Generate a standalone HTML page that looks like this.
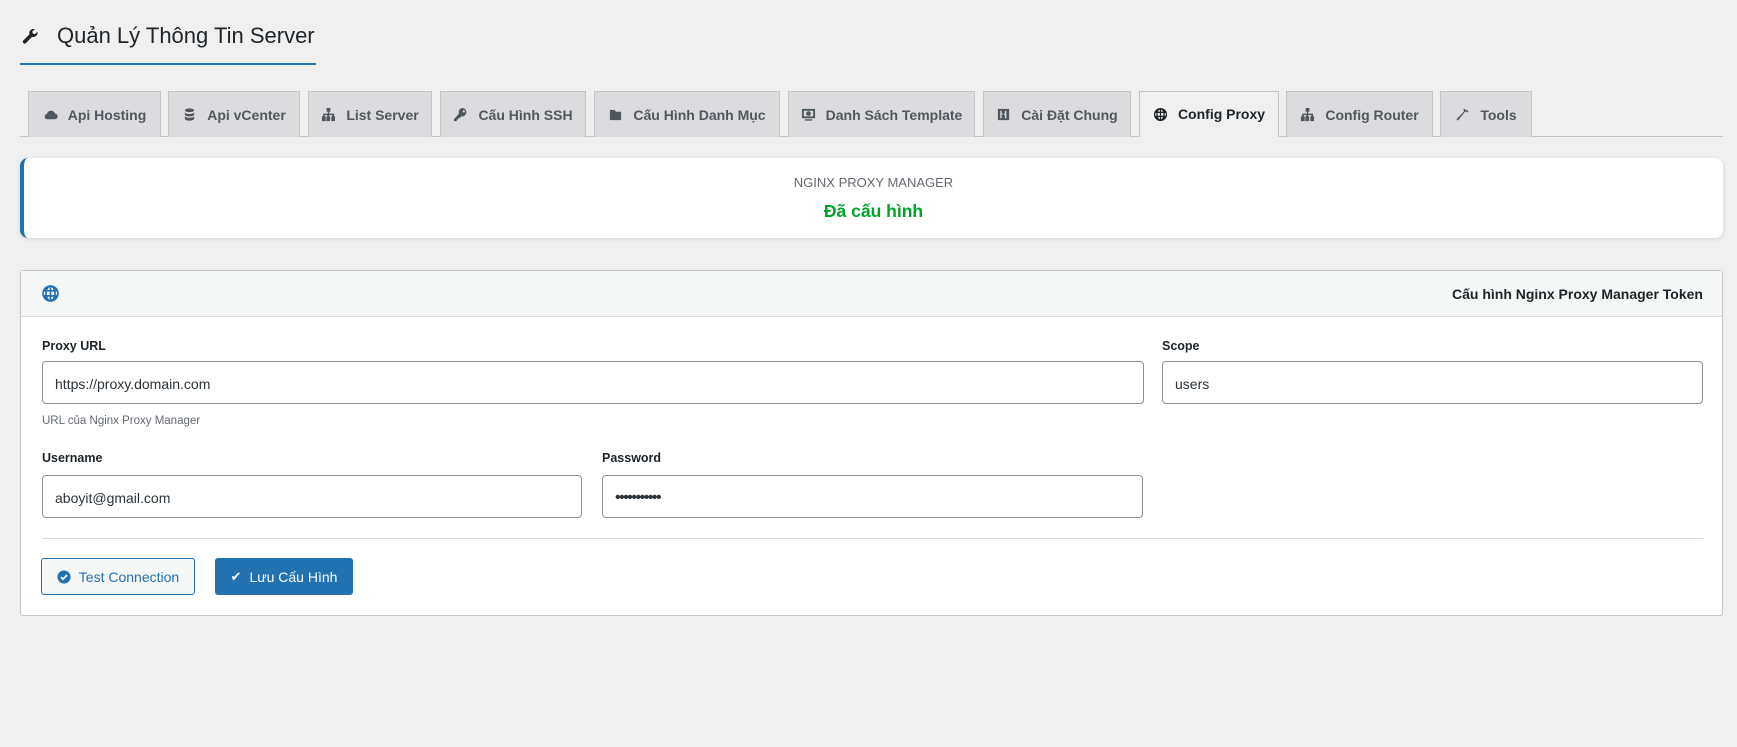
<!DOCTYPE html>
<html><head><meta charset="utf-8"><style>
*{box-sizing:border-box;margin:0;padding:0}
body{width:1737px;height:747px;background:#f0f0f1;font-family:"Liberation Sans",sans-serif;color:#1d2327;position:relative;overflow:hidden}
.abs{position:absolute}
.title{left:22px;top:21px;font-size:22px;color:#1d2327;display:flex;align-items:center;height:30px}
.uline{left:20px;top:63px;width:296px;height:2px;background:#2271b1}
.navline{left:20px;top:136px;width:1703px;height:1px;background:#c3c4c7}
.tab{position:absolute;top:91px;height:46px;background:#dcdcde;border:1px solid #c3c4c7;border-bottom:none;display:flex;align-items:center;justify-content:center;font-size:14px;font-weight:bold;color:#50575e;gap:10px}
.tab.act{background:#f0f0f1;color:#1d2327;height:46px;border-bottom:1px solid #f0f0f1}
.tab svg{width:15px;height:15px;fill:#50575e}
.tab.act svg{fill:#1d2327}
.card{left:20px;top:158px;width:1703px;height:80px;background:#fff;border-radius:8px;border-left:4px solid #2271b1;box-shadow:0 1px 4px rgba(0,0,0,.12);text-align:center}
.card .k{position:absolute;left:0;right:0;top:17px;font-size:13px;color:#646970}
.card .v{position:absolute;left:0;right:0;top:43px;font-size:17.5px;font-weight:bold;color:#00a32a}
.panel{left:20px;top:270px;width:1703px;height:346px;background:#fff;border:1px solid #c3c4c7;border-radius:3px}
.ph{position:absolute;left:0;top:0;right:0;height:46px;background:#f6f7f7;border-bottom:1px solid #dcdcde}
.lbl{position:absolute;font-size:12.5px;font-weight:bold;color:#1d2327}
.inp{position:absolute;height:43px;border:1px solid #8c8f94;border-radius:4px;background:#fff;font-size:14px;padding-left:12px;padding-top:2px;display:flex;align-items:center;color:#2c3338}
.help{position:absolute;font-size:11.5px;color:#646970}
.btn{position:absolute;top:558px;height:37px;border-radius:3px;font-size:14px;display:flex;align-items:center;justify-content:center;gap:8px}
</style></head><body>
<div class="abs title"><svg width="17" height="17" viewBox="0 0 16 16" style="margin-right:18px"><path d="M14.5 3.5l-2.3 2.3-2-.5-.5-2L12 1a4 4 0 0 0-5 5L1.2 11.8a1.7 1.7 0 0 0 2.4 2.4L9.5 8.3a4 4 0 0 0 5-4.8z" fill="#1d2327"/></svg>Quản Lý Thông Tin Server</div>
<div class="abs uline"></div>
<div class="abs navline"></div>

<div class="tab" style="left:28px;width:133px"><svg viewBox="0 0 16 16"><path d="M4 13h8.5a3 3 0 0 0 .3-6A4.5 4.5 0 0 0 4.2 7.5 2.8 2.8 0 0 0 4 13z"/></svg>Api Hosting</div>
<div class="tab" style="left:168px;width:132px"><svg viewBox="0 0 16 16"><ellipse cx="8" cy="3.5" rx="5" ry="2"/><path d="M3 5.5c0 1.1 2.2 2 5 2s5-.9 5-2v2.5c0 1.1-2.2 2-5 2s-5-.9-5-2zM3 9.5c0 1.1 2.2 2 5 2s5-.9 5-2v3c0 1.1-2.2 2-5 2s-5-.9-5-2z"/></svg>Api vCenter</div>
<div class="tab" style="left:308px;width:124px"><svg viewBox="0 0 16 16"><path d="M6 1h4v4H8.7v2H14v3h1v5h-4v-5h1V8.5H8.7V10h1v5h-4v-5h1V8.5H4V10h1v5H1v-5h1.3V7h5V5H6z"/></svg>List Server</div>
<div class="tab" style="left:440px;width:146px"><svg viewBox="0 0 16 16"><path d="M10.5 1a4.5 4.5 0 0 0-4.2 6.1L1 13v2h3v-1.5h1.5V12H7l1.8-2A4.5 4.5 0 1 0 10.5 1zm1 2.5a1.2 1.2 0 1 1 0 2.4 1.2 1.2 0 0 1 0-2.4z"/></svg>Cấu Hình SSH</div>
<div class="tab" style="left:594px;width:186px"><svg viewBox="0 0 16 16"><path d="M2 3h5l1.5 2H14v9H2z"/></svg>Cấu Hình Danh Mục</div>
<div class="tab" style="left:788px;width:187px"><svg viewBox="0 0 16 16"><path d="M1 2h14v10H1zm2 2v6h10V4zm5 .5a2.5 2.5 0 1 1 0 5 2.5 2.5 0 0 1 0-5zM4 13h8v1.5H4z"/></svg>Danh Sách Template</div>
<div class="tab" style="left:983px;width:148px"><svg viewBox="0 0 16 16"><path d="M2 2h12v12H2zm2.5 2v8h1.5V8h1V6.5H6V4zm5 0v3H8.5v1.5h1V12h1.5V4z"/></svg>Cài Đặt Chung</div>
<div class="tab act" style="left:1139px;width:140px"><svg viewBox="0 0 16 16"><path d="M8 1a7 7 0 1 0 0 14A7 7 0 0 0 8 1zm-.7 1.6V5H5.4c.4-1.3 1.1-2.2 1.9-2.4zm1.4 0c.8.2 1.5 1.1 1.9 2.4H8.7zM5 6.4h2.3v2.9H5A11 11 0 0 1 5 6.4zm3.7 0H11a11 11 0 0 1 0 2.9H8.7zM3.6 6.4a9 9 0 0 0 0 2.9H2.5a5.6 5.6 0 0 1 0-2.9zm8.8 0h1.1a5.6 5.6 0 0 1 0 2.9h-1.1a9 9 0 0 0 0-2.9zM5.4 10.7h1.9v2.4c-.8-.2-1.5-1.1-1.900-2.4zm3.3 0h1.9c-.4 1.3-1.1 2.2-1.9 2.4z"/></svg>Config Proxy</div>
<div class="tab" style="left:1286px;width:147px"><svg viewBox="0 0 16 16"><path d="M6 1h4v4H8.7v2H14v3h1v5h-4v-5h1V8.5H8.7V10h1v5h-4v-5h1V8.5H4V10h1v5H1v-5h1.3V7h5V5H6z"/></svg>Config Router</div>
<div class="tab" style="left:1440px;width:92px"><svg viewBox="0 0 16 16"><path d="M9 1.5l5.5 3-1 1.2L11 4.6 3 14.5 1.5 13l8-8.2z"/></svg>Tools</div>

<div class="abs card"><div class="k">NGINX PROXY MANAGER</div><div class="v">Đã cấu hình</div></div>

<div class="abs panel">
 <div class="ph">
  <svg class="abs" style="left:20px;top:13px" width="19" height="19" viewBox="0 0 16 16"><path fill="#2271b1" d="M8 1a7 7 0 1 0 0 14A7 7 0 0 0 8 1zm-.7 1.6V5H5.4c.4-1.3 1.1-2.2 1.9-2.4zm1.4 0c.8.2 1.5 1.1 1.9 2.4H8.7zM5 6.4h2.3v2.9H5A11 11 0 0 1 5 6.4zm3.7 0H11a11 11 0 0 1 0 2.9H8.7zM3.6 6.4a9 9 0 0 0 0 2.9H2.5a5.6 5.6 0 0 1 0-2.9zm8.8 0h1.1a5.6 5.6 0 0 1 0 2.9h-1.1a9 9 0 0 0 0-2.9zM5.4 10.7h1.9v2.4c-.8-.2-1.5-1.1-1.9-2.4zm3.3 0h1.9c-.4 1.3-1.1 2.2-1.9 2.4z"/></svg>
  <div class="abs" style="right:19px;top:15px;font-size:14px;font-weight:bold;color:#1d2327">Cấu hình Nginx Proxy Manager Token</div>
 </div>
 <div class="lbl" style="left:21px;top:68px">Proxy URL</div>
 <div class="inp" style="left:21px;top:90px;width:1102px">https://proxy.domain.com</div>
 <div class="help" style="left:21px;top:144px">URL của Nginx Proxy Manager</div>
 <div class="lbl" style="left:1141px;top:68px">Scope</div>
 <div class="inp" style="left:1141px;top:90px;width:541px">users</div>
 <div class="lbl" style="left:21px;top:180px">Username</div>
 <div class="inp" style="left:21px;top:204px;width:540px">aboyit@gmail.com</div>
 <div class="lbl" style="left:581px;top:180px">Password</div>
 <div class="inp" style="left:581px;top:204px;width:541px;font-size:16px;letter-spacing:-1.5px">•••••••••••</div>
 <div class="abs" style="left:21px;top:267px;width:1661px;height:1px;background:#dcdcde"></div>
</div>
<div class="btn" style="left:41px;width:154px;border:1px solid #2271b1;background:#f6f7f7;color:#2271b1"><svg width="14" height="14" viewBox="0 0 16 16"><circle cx="8" cy="8" r="7.5" fill="#2271b1"/><path d="M4.5 8.2l2.3 2.3 4.7-4.8" stroke="#fff" stroke-width="2" fill="none"/></svg>Test Connection</div>
<div class="btn" style="left:215px;width:138px;background:#2271b1;color:#fff"><span style="font-size:13px">✔</span>Lưu Cấu Hình</div>
</body></html>
